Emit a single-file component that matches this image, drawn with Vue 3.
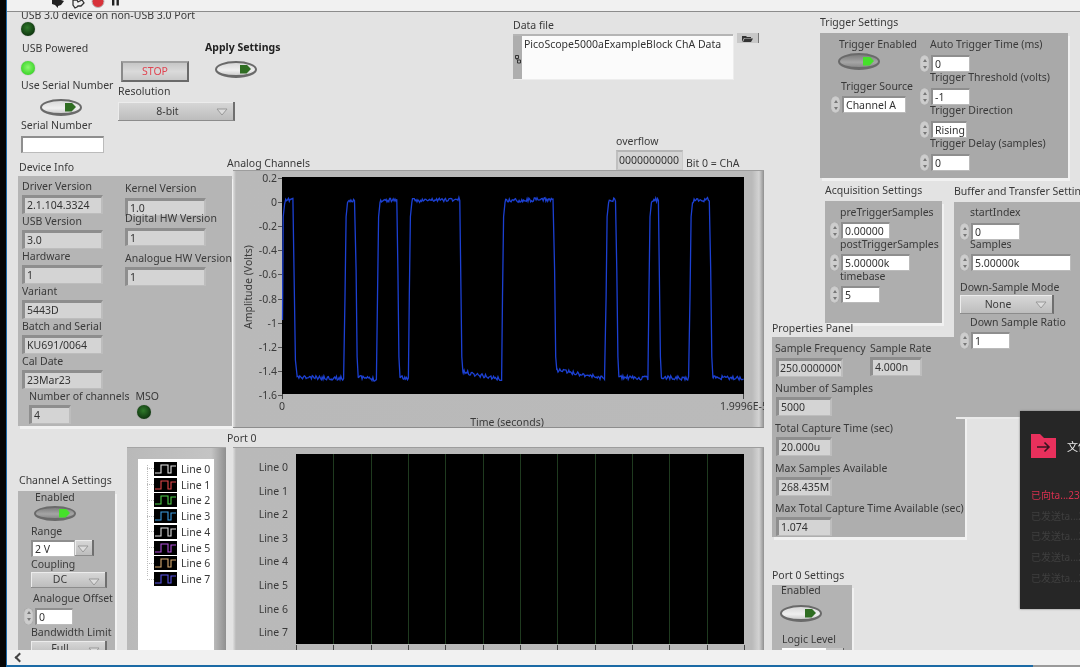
<template>
  <div class="window">
    <div class="edge"></div>
    <div class="main">
      <div class="toolbar">
        <svg class="tool-icons" width="70" height="11" viewBox="0 0 70 11">
          <path d="M0 0h9l3 1-3 4-3 1v2l-3-3-3-1z" fill="#222" />
          <path d="M21 0h4l1 2 4-2 2 3-3 3h-3l-1 1-2 1-2-3z" fill="none" stroke="#333" stroke-width="1.300" />
          <circle cx="46" cy="1.500" r="6" fill="#d8323a" stroke="#bbb" stroke-width="1" />
          <rect x="60" y="0" width="2.400" height="5.500" fill="#222" />
          <rect x="64.500" y="0" width="2.400" height="5.500" fill="#222" />
        </svg>
      </div>

      <div class="canvas">
        <!-- top left column -->
        <div class="usb-col">
          <div class="lbl">USB 3.0 device on non-USB 3.0 Port</div>
          <div class="led off"></div>
          <div class="lbl usb-powered">USB Powered</div>
          <div class="led on usb-led"></div>
          <div class="lbl use-serial">Use Serial Number</div>
          <div class="toggle serial-toggle"><span class="mark"></span></div>
          <div class="lbl serial-lbl">Serial Number</div>
          <div class="fld white serial-fld"></div>
        </div>

        <div class="stop-col">
          <div class="stop">STOP</div>
          <div class="lbl res-lbl">Resolution</div>
          <div class="ring res-ring"><span class="ring-text">8-bit</span><svg class="tri" width="12" height="8" viewBox="0 0 12 8"><path d="M1 1h10L6 7z" fill="#dcdcdc" stroke="#999" /></svg></div>
        </div>

        <div class="apply-col">
          <div class="lbl apply-lbl">Apply Settings</div>
          <div class="toggle apply-toggle"><span class="mark"></span></div>
        </div>

        <div class="datafile">
          <div class="lbl">Data file</div>
          <div class="file-row">
            <div class="file-box">
              <div class="file-strip">
                <svg width="6" height="9" viewBox="0 0 6 9"><path d="M.5.5h3v3h-3zM2.500 5h3v3h-3zM2 3.500V5" fill="none" stroke="#333" /></svg>
              </div>
              <div class="file-text">PicoScope5000aExampleBlock ChA Data</div>
            </div>
            <div class="browse">
              <svg width="11" height="7" viewBox="0 0 11 7"><path d="M0 7V1h4l1 1h4v1H2L0 7zm2.500-3.500H11L9 7H1z" fill="#333" /></svg>
            </div>
          </div>
        </div>

        <div class="overflow-ind">
          <div class="lbl">overflow</div>
          <div class="overflow-row">
            <div class="fld overflow-fld">0000000000</div>
            <div class="lbl">Bit 0 = ChA</div>
          </div>
        </div>

        <!-- device info -->
        <div class="devinfo">
          <div class="lbl group-lbl">Device Info</div>
          <div class="panel devinfo-panel">
            <div class="dev-left">
              <div v-for="f in deviceLeft" :key="f.label" class="ctl">
                <div class="lbl">{{ f.label }}</div>
                <div class="fld dev-fld">{{ f.value }}</div>
              </div>
              <div class="dev-bottom">
                <div class="ctl">
                  <div class="lbl">Number of channels</div>
                  <div class="fld chan-fld">4</div>
                </div>
                <div class="ctl mso">
                  <div class="lbl">MSO</div>
                  <div class="led off mso-led"></div>
                </div>
              </div>
            </div>
            <div class="dev-right">
              <div class="lbl">Kernel Version</div>
              <div class="fld dev-fld kernel">1.0</div>
              <div class="lbl digital-lbl">Digital HW Version</div>
              <div class="fld dev-fld kernel">1</div>
              <div class="lbl analog-lbl">Analogue HW Version</div>
              <div class="fld dev-fld analog-fld">1</div>
            </div>
          </div>
        </div>

        <!-- analog graph -->
        <div class="analog">
          <div class="lbl">Analog Channels</div>
          <div class="graph-frame">
            <div class="ytitle"><span>Amplitude (Volts)</span></div>
            <div class="yscale">
              <div v-for="t in yTicks" :key="t" class="ytick">{{ t }}</div>
            </div>
            <div class="plot-col">
              <svg class="plot" width="462" height="222" viewBox="0 0 462 222">
                <rect width="462" height="217" fill="#000" />
                <polyline :points="wavePoints" fill="none" stroke="#1c40d2" stroke-width="1.300" />
                <path d="M.5 217v5M461.500 217v5" stroke="#444" />
              </svg>
              <div class="xscale"><span class="x0">0</span><span class="x1">1.9996E-5</span></div>
              <div class="lbl xtitle">Time (seconds)</div>
            </div>
          </div>
        </div>

        <!-- digital legend -->
        <div class="legend">
          <div class="legend-inner">
            <div v-for="l in digitalLines" :key="l.name" class="legend-row">
              <svg width="23" height="14" viewBox="0 0 23 14">
                <rect width="23" height="14" fill="#000" />
                <path d="M1 11h6V3h7v8h3V4h5" fill="none" :stroke="l.color" stroke-width="1.100" />
              </svg>
              <span class="lbl">{{ l.name }}</span>
            </div>
          </div>
        </div>

        <!-- digital graph -->
        <div class="port0">
          <div class="lbl">Port 0</div>
          <div class="graph-frame digital-frame">
            <div class="line-names">
              <div v-for="l in digitalLines" :key="l.name" class="lbl line-name">{{ l.name }}</div>
            </div>
            <svg class="plot" width="448" height="197" viewBox="0 0 448 197">
              <rect width="448" height="190" fill="#000" />
              <g v-for="x in gridLines" :key="x">
                <path v-if="x > 1 && x < 447" :d="`M${x} 0v190`" stroke="#1f3a1f" />
                <path :d="`M${x} 191v5`" stroke="#444" />
              </g>
            </svg>
          </div>
        </div>

        <!-- channel A -->
        <div class="cha">
          <div class="lbl group-lbl">Channel A Settings</div>
          <div class="panel cha-panel">
            <div class="lbl cha-enabled">Enabled</div>
            <div class="toggle active cha-toggle"><span class="mark"></span></div>
            <div class="lbl cha-range">Range</div>
            <div class="range-row">
              <div class="fld white range-fld">2 V</div>
              <div class="ring range-ring"><svg class="tri" width="12" height="8" viewBox="0 0 12 8"><path d="M1 1h10L6 7z" fill="#dcdcdc" stroke="#999" /></svg></div>
            </div>
            <div class="lbl cha-range flush">Coupling</div>
            <div class="ring cha-ring"><span class="ring-text">DC</span><svg class="tri" width="12" height="8" viewBox="0 0 12 8"><path d="M1 1h10L6 7z" fill="#dcdcdc" stroke="#999" /></svg></div>
            <div class="lbl cha-offset">Analogue Offset</div>
            <div class="num cha-num"><span class="spin"></span><div class="fld white offset-fld">0</div></div>
            <div class="lbl cha-range flush">Bandwidth Limit</div>
            <div class="ring cha-ring bw"><span class="ring-text">Full</span><svg class="tri" width="12" height="8" viewBox="0 0 12 8"><path d="M1 1h10L6 7z" fill="#dcdcdc" stroke="#999" /></svg></div>
          </div>
        </div>

        <!-- trigger -->
        <div class="trigger">
          <div class="lbl">Trigger Settings</div>
          <div class="panel dark trigger-panel">
            <div class="trig-left">
              <div class="lbl trig-en">Trigger Enabled</div>
              <div class="toggle active trig-toggle"><span class="mark"></span></div>
              <div class="lbl trig-src">Trigger Source</div>
              <div class="num trig-num"><span class="spin"></span><div class="fld white src-fld">Channel A</div></div>
            </div>
            <div class="trig-right">
              <div v-for="f in triggerFields" :key="f.label" class="ctl stack">
                <div class="lbl ind">{{ f.label }}</div>
                <div class="num"><span class="spin"></span><div class="fld white" :class="f.cls">{{ f.value }}</div></div>
              </div>
            </div>
          </div>
        </div>

        <!-- acquisition -->
        <div class="acq">
          <div class="lbl">Acquisition Settings</div>
          <div class="panel acq-panel">
            <div v-for="f in acqFields" :key="f.label" class="ctl stack tight">
              <div class="lbl ind">{{ f.label }}</div>
              <div class="num"><span class="spin"></span><div class="fld white" :class="f.cls">{{ f.value }}</div></div>
            </div>
          </div>
        </div>

        <!-- properties, sits behind the buffer panel -->
        <div class="props">
          <div class="lbl">Properties Panel</div>
          <div class="panel props-panel">
            <div class="props-top">
              <div class="ctl freq">
                <div class="lbl">Sample Frequency</div>
                <div class="fld freq-fld">250.000000N</div>
              </div>
              <div class="ctl">
                <div class="lbl">Sample Rate</div>
                <div class="fld rate-fld">4.000n</div>
              </div>
            </div>
            <div v-for="f in propFields" :key="f.label" class="ctl prop-ctl">
              <div class="lbl">{{ f.label }}</div>
              <div class="fld prop-fld">{{ f.value }}</div>
            </div>
          </div>
        </div>

        <!-- buffer -->
        <div class="buffer">
          <div class="lbl">Buffer and Transfer Settings</div>
          <div class="panel buffer-panel">
            <div class="lbl ind">startIndex</div>
            <div class="num buf-first"><span class="spin"></span><div class="fld white f49">0</div></div>
            <div class="lbl ind buf-samples">Samples</div>
            <div class="num buf-second"><span class="spin"></span><div class="fld white f100">5.00000k</div></div>
            <div class="lbl buf-mode">Down-Sample Mode</div>
            <div class="ring buf-ring"><span class="ring-text">None</span><svg class="tri" width="12" height="8" viewBox="0 0 12 8"><path d="M1 1h10L6 7z" fill="#dcdcdc" stroke="#999" /></svg></div>
            <div class="lbl ind buf-ratio">Down Sample Ratio</div>
            <div class="num buf-third"><span class="spin"></span><div class="fld white f39">1</div></div>
          </div>
        </div>

        <!-- port settings -->
        <div class="portset">
          <div class="lbl">Port 0 Settings</div>
          <div class="panel portset-panel">
            <div class="lbl port-enabled">Enabled</div>
            <div class="toggle port-toggle"><span class="mark"></span></div>
            <div class="lbl port-logic">Logic Level</div>
            <div class="logic-row">
              <div class="logic-fld"></div>
              <div class="logic-arrow"></div>
            </div>
          </div>
        </div>

        <!-- transfer toast from another app -->
        <div class="toast">
          <div class="toast-head">
            <svg class="toast-icon" width="25" height="24" viewBox="0 0 25 24">
              <path d="M0 0h9l4 4h12v20H0z" fill="#e8305c" />
              <path d="M6 13h12M13.500 8.500L18 13l-4.500 4.500" fill="none" stroke="#3a1420" stroke-width="1.600" />
            </svg>
            <span class="toast-title">文件传输</span>
          </div>
          <div class="toast-row red">已向ta...2323</div>
          <div v-for="i in 4" :key="i" class="toast-row">已发送ta...2323</div>
        </div>
      </div>

      <div class="scrollbar"><span class="chev"></span></div>
      <div class="statusline"></div>
    </div>
  </div>
</template>

<script setup>
const deviceLeft = [
  { label: 'Driver Version', value: '2.1.104.3324' },
  { label: 'USB Version', value: '3.0' },
  { label: 'Hardware', value: '1' },
  { label: 'Variant', value: '5443D' },
  { label: 'Batch and Serial', value: 'KU691/0064' },
  { label: 'Cal Date', value: '23Mar23' }
]

const triggerFields = [
  { label: 'Auto Trigger Time (ms)', value: '0', cls: 'f39' },
  { label: 'Trigger Threshold (volts)', value: '-1', cls: 'f39' },
  { label: 'Trigger Direction', value: 'Rising', cls: 'f36' },
  { label: 'Trigger Delay (samples)', value: '0', cls: 'f39' }
]

const acqFields = [
  { label: 'preTriggerSamples', value: '0.00000', cls: 'f49' },
  { label: 'postTriggerSamples', value: '5.00000k', cls: 'f69' },
  { label: 'timebase', value: '5', cls: 'f39' }
]

const propFields = [
  { label: 'Number of Samples', value: '5000' },
  { label: 'Total Capture Time (sec)', value: '20.000u' },
  { label: 'Max Samples Available', value: '268.435M' },
  { label: 'Max Total Capture Time Available (sec)', value: '1.074' }
]

const yTicks = ['0.2', '0', '-0.2', '-0.4', '-0.6', '-0.8', '-1', '-1.2', '-1.4', '-1.6']

const digitalLines = [
  { name: 'Line 0', color: '#e6e6e6' },
  { name: 'Line 1', color: '#e2474a' },
  { name: 'Line 2', color: '#4fd04a' },
  { name: 'Line 3', color: '#3d9be0' },
  { name: 'Line 4', color: '#dddddd' },
  { name: 'Line 5', color: '#b04fd8' },
  { name: 'Line 6', color: '#d8aa70' },
  { name: 'Line 7', color: '#5a55e8' }
]

const gridLines = Array.from({ length: 13 }, (_, i) => Math.round(i * 37.33) + 0.5)

// waveform: knots were read off the zoomed screenshot (x in 2.8x, y in 3x)
let seed = 11
const rand = () => {
  seed = (seed * 16807) % 2147483647
  return seed / 2147483647 - 0.5
}
const toX = (px) => px / 2.8 + 220 - 282
const toY = (py) => py / 3 + 130 - 177

const pulses = [
  [350, 380, 745], [441, 497, 748], [530, 673, 745], [791, 936, 748],
  [1081, 1110, 745], [1201, 1229, 745], [1316, 1373, 745], [1600, 1600, 745]
]

function buildWave() {
  const pts = []
  const flat = (x0, y0, x1, y1) => {
    for (let px = x0; px < x1; px += 2.5) {
      const t = (px - x0) / (x1 - x0)
      pts.push([px, y0 + (y1 - y0) * t + rand() * 12])
    }
  }
  pts.push([175, 570], [177, 260], [181, 222])
  flat(184, 214, 205, 205)
  pts.push([207, 400], [211, 690], [216, 738])
  let lowFrom = [216, 742]
  for (const [rise, fall, lowEnd] of pulses) {
    if (rise > 1467) {
      flat(lowFrom[0], lowFrom[1], 1467, 745)
      break
    }
    flat(lowFrom[0], lowFrom[1], rise - 2, lowEnd)
    pts.push([rise, 500], [rise + 3, 260], [rise + 7, 218])
    flat(rise + 9, 212, fall - 1, 208)
    const sag = fall === 673 ? 726 : fall === 936 ? 720 : 742
    pts.push([fall + 1, 420], [fall + 4, 680], [fall + 7, sag])
    lowFrom = [fall + 8, sag]
  }
  return pts.map(([x, y]) => `${toX(x).toFixed(1)},${toY(y).toFixed(1)}`).join(' ')
}

const wavePoints = buildWave()
</script>

<style>
html, body { margin: 0; background: #000; }
</style>

<style scoped>
.window {
  width: 1080px;
  height: 667px;
  display: flex;
  overflow: hidden;
  filter: blur(0.55px);
  font-family: "Noto Sans", "Liberation Sans", sans-serif;
  font-size: 10.5px;
  color: #3a3a3a;
}
.edge { width: 6px; background: #050505; border-right: 1px solid #1d6aa8; }
.main { flex: 1; display: flex; flex-direction: column; min-width: 0; }

.toolbar { height: 11px; background: #f1f1f1; border-bottom: 1px solid #8c8c8c; flex: none; overflow: hidden; }
.tool-icons { display: block; margin-left: 45px; }

.canvas { position: relative; flex: 1; background: #e3e3e3; overflow: hidden; }

.scrollbar { height: 15px; background: #f1f1f1; flex: none; display: flex; align-items: center; }
.chev { width: 5px; height: 5px; margin-left: 9px; border-left: 2px solid #444; border-bottom: 2px solid #444; transform: rotate(45deg); }
.statusline { height: 2px; flex: none; background: linear-gradient(90deg, #1b6aa5 0 95.6%, #9a9a9a 95.6%); }

/* shared controls */
.lbl { height: 14px; line-height: 14px; white-space: nowrap; }
.ctl { display: flex; flex-direction: column; }
.panel { background: #b3b3b3; box-shadow: 2px 3px 0 #f1f1f1; }
.panel.dark { background: #a9a9a9; }

.fld {
  box-sizing: border-box;
  height: 19px;
  line-height: 15px;
  padding-left: 2px;
  background: #d4d4d4;
  border-style: solid;
  border-width: 3px 2px 1px 3px;
  border-color: #8e8e8e #bdbdbd #bdbdbd #8e8e8e;
  white-space: nowrap;
  overflow: hidden;
  color: #333;
}
.fld.white { background: #fff; height: 17px; line-height: 14px; border-width: 2px 1px 1px 2px; border-color: #8e8e8e #bbb #bbb #8e8e8e; }
.num { display: flex; align-items: center; gap: 2px; }
.spin { position: relative; width: 9px; height: 17px; border-radius: 5px; background: #cdcdcd; box-shadow: inset 0 0 1px #777; flex: none; }
.spin::before, .spin::after { content: ""; position: absolute; left: 2.500px; border-left: 2px solid transparent; border-right: 2px solid transparent; }
.spin::before { top: 3.500px; border-bottom: 3px solid #777; }
.spin::after { bottom: 3.500px; border-top: 3px solid #777; }

.f36 { width: 36px; }
.f39 { width: 39px; }
.f49 { width: 49px; }
.f69 { width: 69px; }
.f100 { width: 100px; flex: none; }

.led { width: 14px; height: 14px; border-radius: 50%; box-shadow: 0 0 1px #777; }
.led.off { background: radial-gradient(circle at 45% 40%, #2f7a2a, #123c12 65%, #0f2a0f); }
.led.on { background: radial-gradient(circle at 50% 45%, #8cf770, #3fd62c 70%, #7cc76e); }

.toggle {
  box-sizing: border-box;
  width: 42px;
  height: 17px;
  border-radius: 50%;
  background: linear-gradient(#d9d9d9, #efefef 60%, #cfcfcf);
  border: 2px solid #6a6a6a;
  border-bottom-width: 3px;
  display: flex;
  align-items: center;
  justify-content: flex-end;
  padding-right: 4px;
}
.toggle.active { background: linear-gradient(#7e7e7e, #a5a5a5 60%, #8b8b8b); border-color: #6a6a6a; }
.mark { width: 11px; height: 9px; background: #2f6d22; clip-path: polygon(0 0, 60% 0, 100% 50%, 60% 100%, 0 100%); }
.toggle.active .mark { background: #45e02a; }

.ring {
  box-sizing: border-box;
  height: 19px;
  display: flex;
  align-items: center;
  justify-content: center;
  position: relative;
  background: linear-gradient(#d8d8d8, #bdbdbd);
  border-right: 2px solid #6f6f6f;
  border-bottom: 1px solid #8c8c8c;
  box-shadow: inset 1px 1px 0 #ececec;
}
.ring-text { margin-right: 16px; }
.tri { position: absolute; right: 5px; top: 6px; }

/* top left */
.usb-col { position: absolute; left: 14px; top: -4px; display: flex; flex-direction: column; align-items: flex-start; }
.usb-powered { margin-top: 5px; margin-left: 1px; }
.usb-led { margin-top: 6px; }
.use-serial { margin-top: 3px; }
.serial-toggle { margin: 7px 0 0 19px; }
.serial-lbl { margin-top: 2px; }
.serial-fld { width: 83px; height: 20px; margin-top: 4px; background: #f6f6f6; border-color: #b4b4b4 #eee #eee #b4b4b4; }

.stop-col { position: absolute; left: 111px; top: 49px; display: flex; flex-direction: column; align-items: flex-start; }
.stop {
  box-sizing: border-box;
  width: 68px;
  height: 21px;
  margin-left: 3px;
  background: linear-gradient(#c7c7c7, #dadada 50%, #c9c9c9);
  border: 2px solid #6e6e6e;
  border-color: #a0a0a0 #6a6a6a #6a6a6a #8a8a8a;
  color: #e04552;
  text-align: center;
  line-height: 17px;
  font-size: 10.500px;
}
.res-lbl { margin-top: 2px; }
.res-ring { width: 117px; margin-top: 4px; }

.apply-col { position: absolute; left: 198px; top: 28px; }
.apply-lbl { font-weight: 700; color: #222; }
.apply-toggle { margin: 7px 0 0 10px; }

.datafile { position: absolute; left: 506px; top: 6px; }
.file-row { display: flex; gap: 4px; margin-top: 2px; align-items: flex-start; }
.file-box { display: flex; width: 220px; height: 45px; background: #fbfbfb; box-shadow: 1px 1px 0 #ededed; border-top: 2px solid #b5b5b5; box-sizing: border-box; }
.file-strip { width: 9px; background: #aeaeae; display: flex; align-items: center; justify-content: center; padding-top: 3px; box-sizing: border-box; }
.file-text { padding: 1px 0 0 2px; line-height: 14px; color: #333; white-space: nowrap; }
.browse { box-sizing: border-box; width: 22px; height: 10px; margin-top: -1px; background: #c8c8c8; border-right: 1px solid #777; display: flex; align-items: center; justify-content: center; }

.overflow-ind { position: absolute; left: 609px; top: 122px; }
.overflow-row { display: flex; align-items: flex-end; gap: 3px; margin-top: 2px; }
.overflow-fld { width: 67px; height: 20px; padding-left: 1px; line-height: 16px; border-width: 2px 1px 1px 2px; border-color: #b5b5b5 #c9c9c9 #c9c9c9 #c0c0c0; }

/* device info */
.devinfo { position: absolute; left: 11px; top: 148px; }
.group-lbl { margin-left: 1px; }
.devinfo-panel { width: 214px; height: 250px; margin-top: 2px; display: flex; background: #b5b5b5; }
.dev-left { padding: 3px 0 0 4px; width: 103px; }
.dev-fld { width: 81px; margin-top: 2px; }
.dev-bottom { display: flex; margin-left: 7px; }
.chan-fld { width: 42px; margin-top: 2px; }
.mso { margin-left: 6px; }
.mso-led { margin: 2px 0 0 1px; }
.dev-right { padding-top: 5px; }
.kernel { margin-top: 3px; height: 18px; line-height: 15px; }
.digital-lbl { margin-top: -5px; }
.analog-lbl { margin-top: 5px; }
.analog-fld { margin-top: 2px; }

/* graphs */
.analog { position: absolute; left: 220px; top: 144px; }
.port0 { position: absolute; left: 220px; top: 419px; }
.graph-frame {
  display: flex;
  box-sizing: border-box;
  width: 531px;
  height: 258px;
  margin-left: 6px;
  padding: 6px 0 0 8px;
  overflow: hidden;
  background: linear-gradient(90deg, #dedede 0, #b9b9b9 3px, #bababa 519px, #d3d3d3 526px, #8f8f8f 531px);
  border-top: 1px solid #9d9d9d;
  border-bottom: 1px solid #8d8d8d;
}
.ytitle { width: 14px; height: 217px; display: flex; align-items: center; justify-content: center; margin-top: 2px; }
.ytitle span { writing-mode: vertical-rl; transform: rotate(180deg); white-space: nowrap; }
.yscale { width: 27px; height: 217px; display: flex; flex-direction: column; justify-content: space-between; }
.ytick { position: relative; top: 1px; height: 0; line-height: 0; text-align: right; padding-right: 5px; }
.ytick::after { content: ""; position: absolute; right: 0; top: 0; width: 4px; height: 1px; background: #555; }
.plot { display: block; flex: none; overflow: visible; }
.plot-col { width: 462px; }
.xscale { display: flex; justify-content: space-between; height: 16px; line-height: 14px; }
.x0 { margin-left: -3px; }
.x1 { margin-right: -24px; }
.xtitle { text-align: center; width: 450px; }

.digital-frame { height: 220px; margin-top: 2px; padding: 6px 0 0 0; }
.line-names { width: 55px; margin-top: 2px; padding-right: 8px; }
.line-name { height: 23.600px; line-height: 23.600px; text-align: right; }

.legend {
  position: absolute;
  left: 120px;
  top: 435px;
  box-sizing: border-box;
  width: 99px;
  height: 210px;
  padding: 11px 12px 0 11px;
  background: linear-gradient(90deg, #b9b9b9, #c4c4c4 85%, #8f8f8f);
  border-top: 1px solid #a5a5a5;
}
.legend-inner { height: 100%; background: #fff; padding: 2px 0 0 16px; position: relative; box-sizing: border-box; }
.legend-inner::before { content: ""; position: absolute; left: 9px; top: 6px; height: 111px; border-left: 1px dotted #bbb; }
.legend-row { display: flex; align-items: center; gap: 4px; height: 15.750px; position: relative; }
.legend-row::before { content: ""; position: absolute; left: -7px; width: 7px; border-top: 1px dotted #bbb; }

/* channel A */
.cha { position: absolute; left: 11px; top: 461px; }
.cha-panel { box-sizing: border-box; width: 97px; height: 165px; margin-top: 4px; padding-left: 13px; display: flex; flex-direction: column; align-items: flex-start; }
.cha-enabled { margin: -1px 0 0 4px; }
.cha-toggle { margin: 2px 0 0 3px; }
.cha-range { margin-top: 3px; }
.cha-range.flush { margin-top: 0; }
.range-row { display: flex; margin-top: 2px; }
.range-fld { width: 44px; height: 16px; border-width: 1px; border-color: #ddd; }
.range-ring { width: 19px; height: 16px; }
.range-ring .tri { right: 3px; top: 5px; }
.cha-ring { width: 76px; height: 18px; margin-top: 1px; }
.cha-ring.bw { margin-top: 2px; }
.cha-offset { margin: 3px 0 0 2px; }
.cha-num { margin: 3px 0 0 -7px; }
.offset-fld { width: 38px; }

/* trigger */
.trigger { position: absolute; left: 813px; top: 3px; }
.trigger-panel { box-sizing: border-box; width: 248px; height: 145px; margin-top: 4px; display: flex; padding: 4px 0 0 11px; }
.trig-left { width: 89px; display: flex; flex-direction: column; align-items: flex-start; }
.trig-en { margin-left: 8px; }
.trig-toggle { margin: 2px 0 0 7px; }
.trig-src { margin: 9px 0 0 10px; }
.trig-num { margin-top: 3px; }
.src-fld { width: 64px; }
.stack + .stack { margin-top: -2px; }
.stack .num { margin-top: 4px; }
.ind { margin-left: 10px; }

/* acquisition */
.acq { position: absolute; left: 818px; top: 171px; }
.acq-panel { box-sizing: border-box; width: 117px; height: 122px; margin-top: 4px; padding: 4px 0 0 5px; background: #aeaeae; }
.stack.tight .num { margin-top: 3px; }

/* properties */
.props { position: absolute; left: 765px; top: 309px; }
.props-panel { box-sizing: border-box; width: 193px; height: 200px; margin-top: 2px; padding: 4px 0 0 3px; background: #aeaeae; }
.props-top { display: flex; }
.freq { width: 95px; }
.freq-fld { width: 67px; margin: 3px 0 0 1px; padding-left: 1px; }
.rate-fld { width: 52px; margin-top: 2px; }
.prop-ctl { margin-top: 4px; }
.prop-ctl + .prop-ctl { margin-top: 5px; }
.prop-fld { width: 56px; margin: 2px 0 0 1px; }

/* buffer */
.buffer { position: absolute; left: 947px; top: 172px; }
.buffer-panel { box-sizing: border-box; width: 126px; height: 215px; margin-top: 4px; padding: 3px 0 0 6px; background: #aeaeae; overflow: hidden; box-shadow: 2px 2px 0 #eaeaea; }
.buf-first { margin-top: 4px; }
.buf-samples { margin-top: -3px; }
.buf-second { margin-top: 3px; }
.buf-mode { margin-top: 9px; }
.buf-ring { width: 94px; margin-top: 1px; }
.buf-ratio { margin-top: 1px; }
.buf-third { margin-top: 3px; }

/* port settings */
.portset { position: absolute; left: 765px; top: 556px; }
.portset-panel { box-sizing: border-box; width: 80px; height: 80px; margin-top: 3px; padding-left: 9px; overflow: hidden; }
.port-enabled { margin-top: -2px; }
.port-toggle { margin: 8px 0 0 -1px; }
.port-logic { margin: 10px 0 0 1px; }
.logic-row { display: flex; margin: 2px 0 0 1px; }
.logic-fld { width: 44px; height: 14px; background: #fff; }
.logic-arrow { width: 17px; height: 14px; background: #c6c6c6; border-right: 1px solid #666; }

/* toast */
.toast { position: absolute; left: 1013px; top: 399px; box-sizing: border-box; width: 80px; height: 198px; background: #262626; padding: 23px 0 0 11px; overflow: hidden; box-shadow: 0 0 2px #777; }
.toast-head { display: flex; align-items: center; gap: 11px; height: 24px; margin-bottom: 27px; }
.toast-icon { flex: none; }
.toast-title { color: #ededed; font-size: 11px; font-family: "Noto Sans CJK SC", sans-serif; white-space: nowrap; }
.toast-row { height: 20.700px; line-height: 20.700px; white-space: nowrap; font-family: "Noto Sans", "Noto Sans CJK SC", sans-serif; font-size: 10px; color: #3f3f3f; }
.toast-row.red { color: #d8304f; }
</style>
